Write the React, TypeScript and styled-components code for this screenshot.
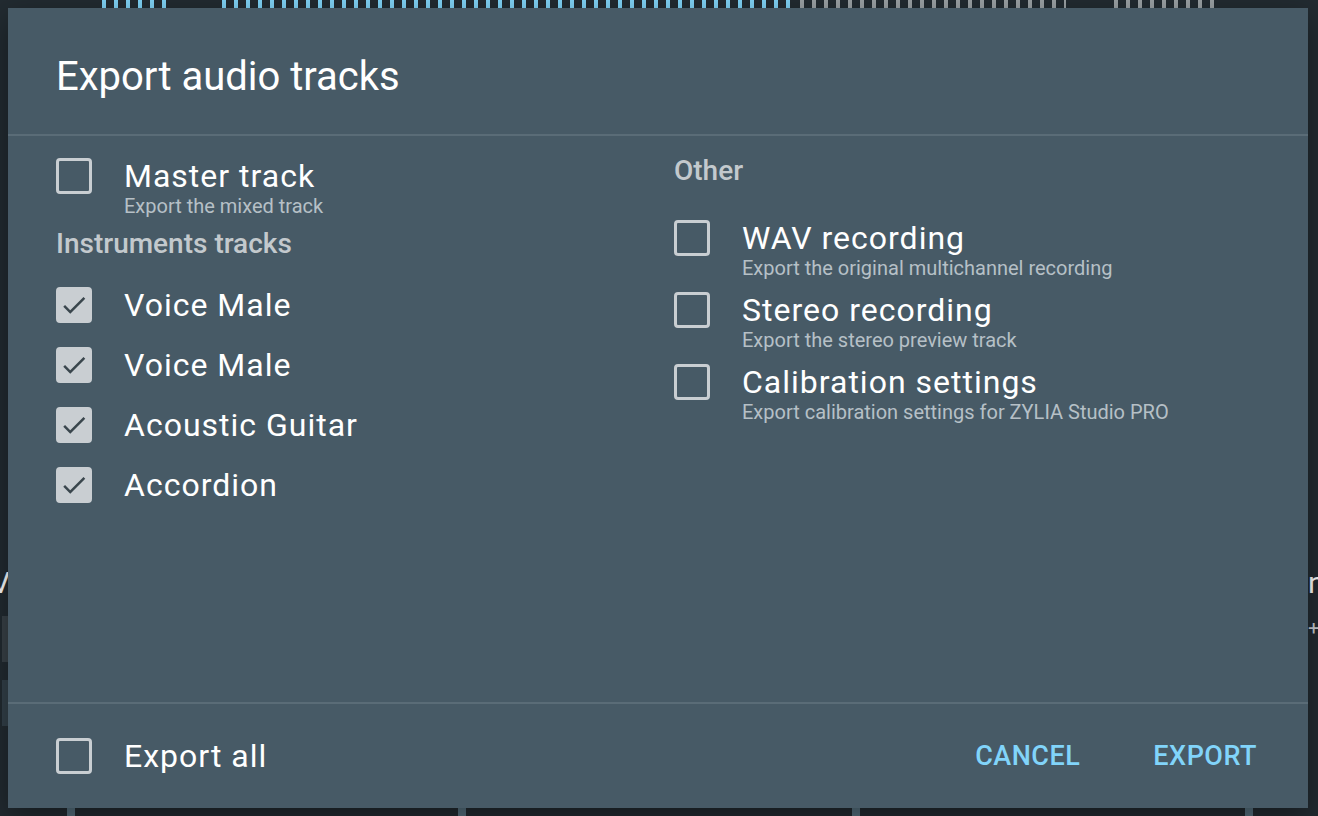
import styled, { createGlobalStyle } from "styled-components";

const GlobalStyle = createGlobalStyle`
  html, body {
    margin: 0;
    padding: 0;
    background: #222b31;
  }
  body {
    font-family: Roboto, "Liberation Sans", sans-serif;
    overflow: hidden;
  }
`

const Page = styled.div`
  position: relative;
  width: 1318px;
  height: 816px;
  background: #222b31;
  overflow: hidden;
`

/* --- the app behind the modal --- */

const Backdrop = styled.div`
  height: 100%;
  display: flex;
  flex-direction: column;
`

const MeterRow = styled.div`
  display: flex;
  height: 8px;
  flex: none;
`

const Meter = styled.div<{ $gap: number; $width: number; $color: string }>`
  margin-left: ${p => p.$gap}px;
  width: ${p => p.$width}px;
  height: 100%;
  background: repeating-linear-gradient(90deg, ${p => p.$color} 0 4px, transparent 4px 12px);
`

const Middle = styled.div`
  flex: 1;
  display: flex;
  justify-content: space-between;
`

const SideStrip = styled.div<{ $align: string }>`
  width: 10px;
  overflow: hidden;
  display: flex;
  flex-direction: column;
  align-items: ${p => p.$align};
  padding-top: 560px;
  gap: 18px;
  color: #fff;
  font-size: 30px;
  line-height: 30px;
`

const SideNote = styled.span`
  font-size: 20px;
  line-height: 24px;
  color: #c9ced2;
  white-space: nowrap;
`

const SideBlock = styled.div<{ $color: string }>`
  width: 8px;
  height: 46px;
  flex: none;
  background: ${p => p.$color};
`

const BottomRow = styled.div`
  height: 8px;
  flex: none;
  display: flex;
`

const Tick = styled.div<{ $gap: number; $width: number; $color: string }>`
  margin-left: ${p => p.$gap}px;
  width: ${p => p.$width}px;
  height: 100%;
  background: ${p => p.$color};
`

/* --- dialog --- */

const Dialog = styled.div`
  position: absolute;
  left: 8px;
  top: 8px;
  width: 1300px;
  height: 800px;
  background: #475a66;
  display: flex;
  flex-direction: column;
  box-shadow: 0 10px 30px rgba(0, 0, 0, 0.4);
`

const Header = styled.div`
  flex: none;
  height: 128px;
  box-sizing: border-box;
  padding: 10px 48px 0;
  display: flex;
  align-items: center;
  border-bottom: 2px solid #5a6c77;
`

const Title = styled.h2`
  margin: 0;
  font-size: 40px;
  font-weight: 400;
  color: #fff;
`

const Body = styled.div`
  flex: 1;
  display: grid;
  grid-template-columns: 602px 602px;
  column-gap: 16px;
  padding: 19px 48px 0;
`

const Column = styled.div`
  display: flex;
  flex-direction: column;
`

const SectionTitle = styled.div<{ $top?: number }>`
  margin-top: ${p => p.$top ?? 0}px;
  font-size: 28px;
  font-weight: 500;
  line-height: 32px;
  color: #c3c9cd;
`

const OptionList = styled.div<{ $top: number; $gap: number }>`
  display: flex;
  flex-direction: column;
  margin-top: ${p => p.$top}px;
  gap: ${p => p.$gap}px;
`

const Option = styled.label`
  display: flex;
  align-items: flex-start;
  gap: 32px;
  cursor: pointer;
`

const OptionText = styled.div`
  display: flex;
  flex-direction: column;
`

const Label = styled.span`
  font-size: 32px;
  line-height: 36px;
  letter-spacing: 1px;
  color: #fff;
`

const Hint = styled.span`
  font-size: 20px;
  line-height: 24px;
  color: #b6c0c6;
`

const Box = styled.span<{ $checked?: boolean }>`
  flex: none;
  width: 36px;
  height: 36px;
  box-sizing: border-box;
  border-radius: 4px;
  border: 3px solid #c9ced2;
  background: ${p => (p.$checked ? "#c9ced2" : "transparent")};
  display: flex;
  align-items: center;
  justify-content: center;
`

const Footer = styled.div`
  flex: none;
  height: 106px;
  box-sizing: border-box;
  border-top: 2px solid #5a6c77;
  padding: 0 43px 0 48px;
  display: flex;
  align-items: center;
  justify-content: space-between;
`

const Actions = styled.div`
  display: flex;
  gap: 57px;
`

const TextButton = styled.button`
  border: none;
  background: none;
  padding: 6px 8px;
  font-family: inherit;
  font-size: 27px;
  font-weight: 500;
  letter-spacing: 0.5px;
  color: #81d4fa;
  cursor: pointer;
`

function Checkbox({ checked }: { checked?: boolean }) {
  return (
    <Box $checked={checked}>
      {checked && (
        <svg width="30" height="30" viewBox="0 0 24 24">
          <path d="M9 16.17L4.83 12l-1.42 1.41L9 19 21 7l-1.41-1.41z" fill="#3a464d" />
        </svg>
      )}
    </Box>
  )
}

function Row({ label, hint, checked }: { label: string; hint?: string; checked?: boolean }) {
  return (
    <Option>
      <Checkbox checked={checked} />
      <OptionText>
        <Label>{label}</Label>
        {hint && <Hint>{hint}</Hint>}
      </OptionText>
    </Option>
  )
}

const instruments = ["Voice Male", "Voice Male", "Acoustic Guitar", "Accordion"]

const others = [
  { label: "WAV recording", hint: "Export the original multichannel recording" },
  { label: "Stereo recording", hint: "Export the stereo preview track" },
  { label: "Calibration settings", hint: "Export calibration settings for ZYLIA Studio PRO" },
]

export default function App() {
  return (
    <Page>
      <GlobalStyle />
      <Backdrop>
        <MeterRow>
          <Meter $gap={102} $width={64} $color="#7fd3f7" />
          <Meter $gap={56} $width={570} $color="#7fd3f7" />
          <Meter $gap={8} $width={266} $color="#9aa1a4" />
          <Meter $gap={48} $width={100} $color="#9aa1a4" />
        </MeterRow>
        <Middle>
          <SideStrip $align="flex-end">
            <span>V</span>
            <SideBlock $color="#394248" />
            <SideBlock $color="#33414a" />
          </SideStrip>
          <SideStrip $align="flex-start">
            <span>n</span>
            <SideNote>+3</SideNote>
          </SideStrip>
        </Middle>
        <BottomRow>
          <Tick $gap={67} $width={8} $color="#55707e" />
          <Tick $gap={383} $width={8} $color="#55707e" />
          <Tick $gap={386} $width={8} $color="#55707e" />
          <Tick $gap={385} $width={8} $color="#55707e" />
        </BottomRow>
      </Backdrop>

      <Dialog>
        <Header>
          <Title>Export audio tracks</Title>
        </Header>
        <Body>
          <Column>
            <OptionList $top={3} $gap={0}>
              <Row label="Master track" hint="Export the mixed track" />
            </OptionList>
            <SectionTitle $top={10}>Instruments tracks</SectionTitle>
            <OptionList $top={27} $gap={24}>
              {instruments.map((name, i) => (
                <Row key={i} label={name} checked />
              ))}
            </OptionList>
          </Column>
          <Column>
            <SectionTitle>Other</SectionTitle>
            <OptionList $top={33} $gap={12}>
              {others.map(o => (
                <Row key={o.label} label={o.label} hint={o.hint} />
              ))}
            </OptionList>
          </Column>
        </Body>
        <Footer>
          <Row label="Export all" />
          <Actions>
            <TextButton>CANCEL</TextButton>
            <TextButton>EXPORT</TextButton>
          </Actions>
        </Footer>
      </Dialog>
    </Page>
  );
}
